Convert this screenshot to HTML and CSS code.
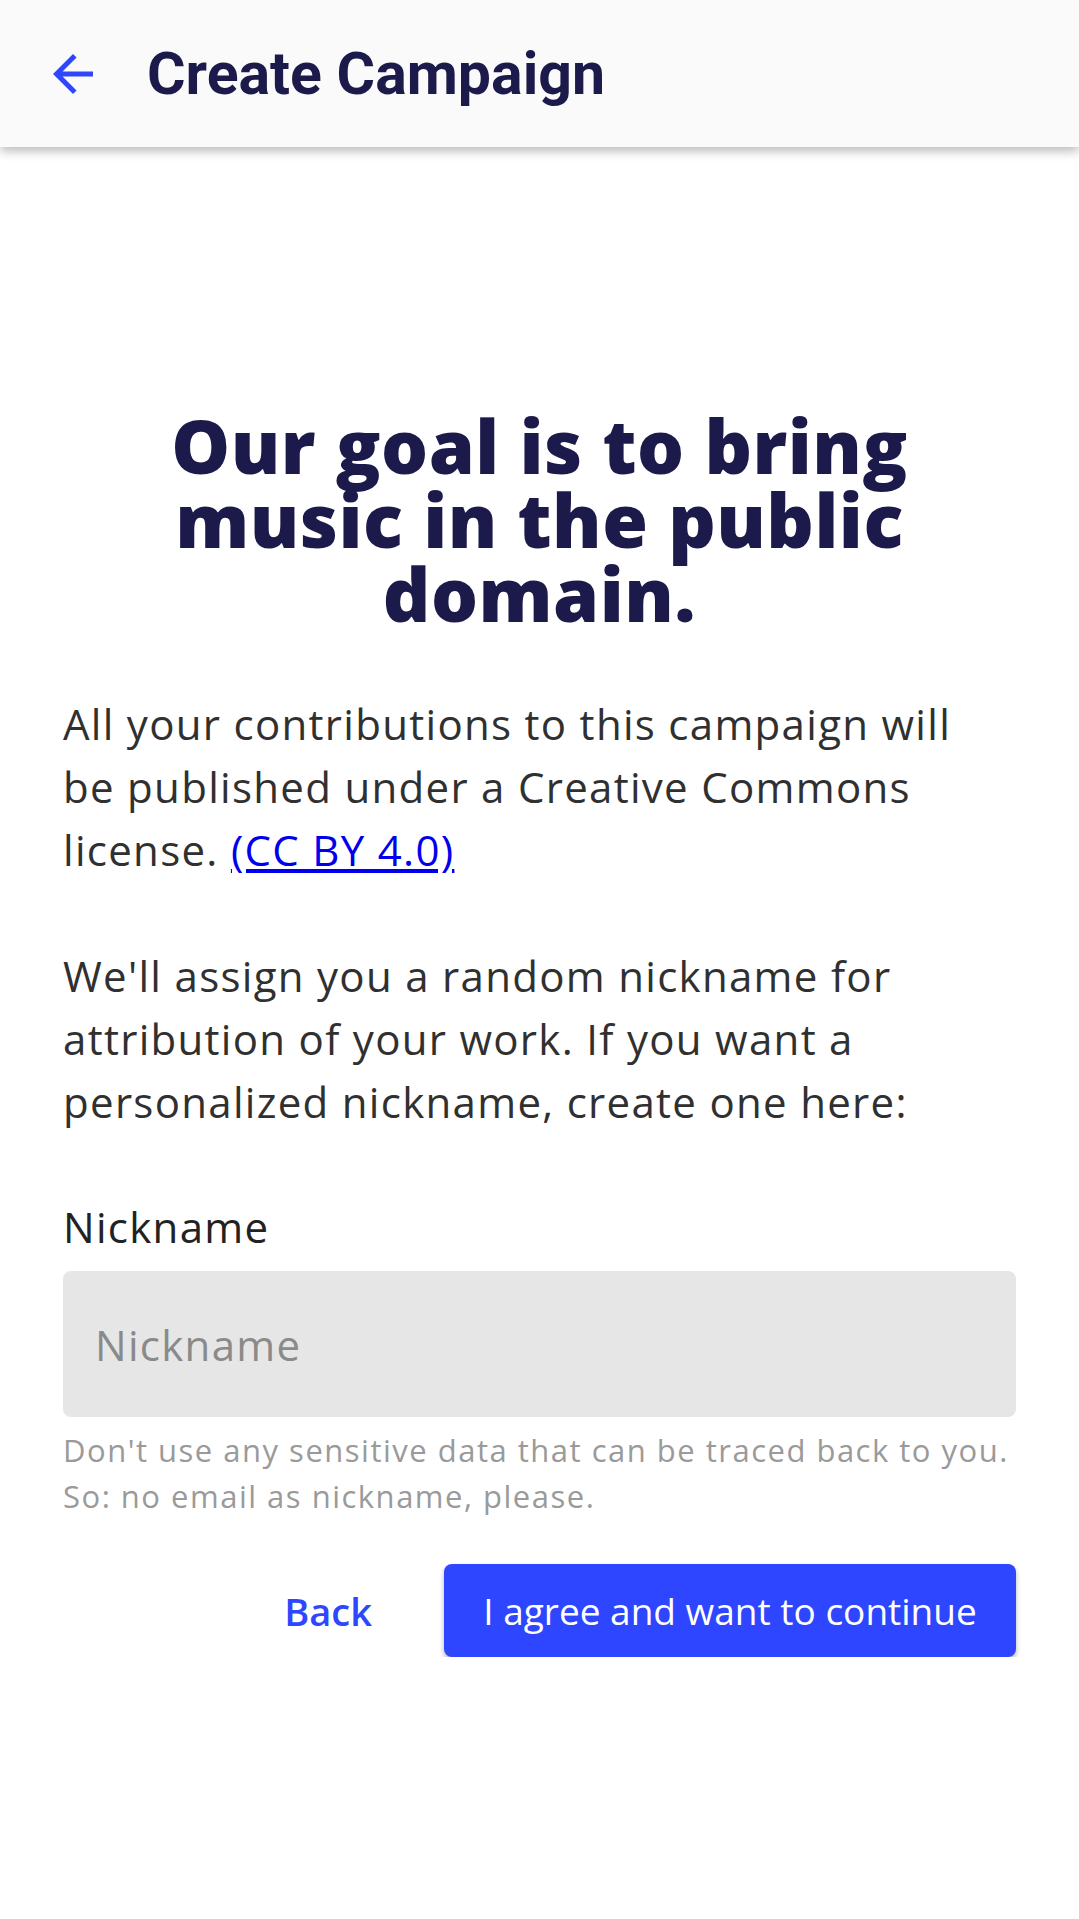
FILE: index.html
```html
<!DOCTYPE html>
<html lang="en">
<head>
<meta charset="utf-8">
<title>Create Campaign</title>
<link rel="stylesheet" href="styles.css">
</head>
<body>
<header class="appbar">
  <button class="back-icon" aria-label="Back">
    <svg viewBox="0 0 24 24" width="60" height="60"><path d="M20 11H7.83l5.59-5.59L12 4l-8 8 8 8 1.41-1.41L7.83 13H20v-2z" fill="currentColor"/></svg>
  </button>
  <h1 class="appbar-title">Create Campaign</h1>
</header>
<main class="content">
  <h2 class="goal">Our goal is to bring music in the public domain.</h2>
  <p class="text">All your contributions to this campaign will be published under a Creative Commons license. <a href="#" class="link">(CC BY 4.0)</a></p>
  <p class="text">We'll assign you a random nickname for attribution of your work. If you want a personalized nickname, create one here:</p>
  <label class="label" for="nick">Nickname</label>
  <input class="input" id="nick" type="text" placeholder="Nickname">
  <p class="hint">Don't use any sensitive data that can be traced back to you. So: no email as nickname, please.</p>
  <div class="actions">
    <button class="btn-text">Back</button>
    <button class="btn-primary">I agree and want to continue</button>
  </div>
</main>
</body>
</html>
```
FILE: styles.css
```css
* { box-sizing: border-box; }
html, body { margin: 0; padding: 0; background: #ffffff; }
body { font-family: "Open Sans", "Noto Sans", sans-serif; }

.appbar {
  height: 147px;
  background: #fafafa;
  display: flex;
  align-items: center;
  box-shadow: 0 4px 10px rgba(0,0,0,0.28);
  position: relative;
}
.back-icon {
  border: 0;
  background: none;
  padding: 0;
  margin-left: 43px;
  width: 60px;
  height: 60px;
  color: #2f46ff;
  display: flex;
}
.appbar-title {
  margin: 0 0 0 44px;
  font-family: Roboto, "Liberation Sans", sans-serif;
  font-weight: 700;
  font-size: 59px;
  color: #1c1a4a;
  line-height: 1;
}

.content {
  padding: 262px 63px 0 63px;
  display: flex;
  flex-direction: column;
}
.goal {
  margin: 0 60px;
  text-align: center;
  font-size: 74px;
  line-height: 74px;
  font-weight: 800;
  color: #1c1a4a;
  letter-spacing: 0.5px;
}
.text {
  margin: 61px 30px 0 0;
  font-size: 42px;
  line-height: 63px;
  color: #303030;
  letter-spacing: 1.3px;
}
.text + .text { margin-top: 63px; }
.link { color: #0000ee; text-decoration: underline; }

.label {
  margin-top: 62px;
  font-size: 42px;
  line-height: 63px;
  color: #222;
  letter-spacing: 1.3px;
}
.input {
  margin-top: 13px;
  height: 146px;
  border: 0;
  border-radius: 8px;
  background: #e6e6e6;
  padding: 0 32px;
  font-family: inherit;
  font-size: 42px;
  color: #222;
  letter-spacing: 1.3px;
}
.input::placeholder { color: #8a8a8a; }
.hint {
  margin: 10px 0 0 0;
  font-size: 31px;
  line-height: 46px;
  color: #9a9a9a;
  letter-spacing: 1.5px;
}
.actions {
  margin-top: 45px;
  display: flex;
  justify-content: flex-end;
  align-items: center;
  gap: 60px;
}
.btn-text, .btn-primary {
  font-family: inherit;
  border: 0;
}
.btn-text {
  background: none;
  color: #2f46ff;
  font-size: 38px;
  font-weight: 600;
  padding: 0 12px;
}
.btn-primary {
  width: 572px;
  height: 93px;
  background: #2e46ff;
  color: #fff;
  font-size: 37px;
  font-weight: 500;
  border-radius: 8px;
  box-shadow: 0 3px 5px rgba(0,0,0,0.3);
}
```
